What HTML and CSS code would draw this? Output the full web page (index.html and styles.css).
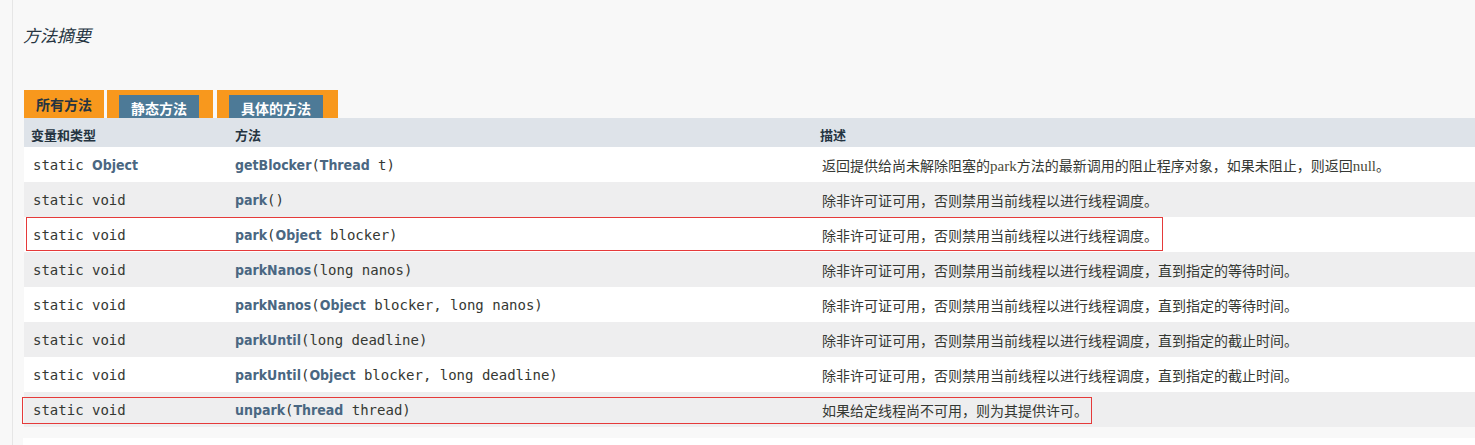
FILE: index.html
```html
<!DOCTYPE html>
<html lang="zh">
<head>
<meta charset="utf-8">
<title>方法摘要</title>
<link rel="stylesheet" href="styles.css">
</head>
<body>
<div class="page">
  <h3 class="title">方法摘要</h3>
  <div class="tabs">
    <span class="tab active">所有方法</span>
    <span class="tab"><span class="tab-inner">静态方法</span></span>
    <span class="tab"><span class="tab-inner">具体的方法</span></span>
  </div>
  <div class="summary">
    <div class="row head">
      <div class="cell">变量和类型</div>
      <div class="cell">方法</div>
      <div class="cell">描述</div>
    </div>
    <div class="row">
      <div class="cell code">static <b class="lnk">Object</b></div>
      <div class="cell code"><b class="lnk">getBlocker</b>(<b class="lnk">Thread</b> t)</div>
      <div class="cell desc">返回提供给尚未解除阻塞的<span class="serif">park</span>方法的最新调用的阻止程序对象，如果未阻止，则返回<span class="serif">null</span>。</div>
    </div>
    <div class="row alt">
      <div class="cell code">static void</div>
      <div class="cell code"><b class="lnk">park</b>()</div>
      <div class="cell desc">除非许可证可用，否则禁用当前线程以进行线程调度。</div>
    </div>
    <div class="row">
      <div class="cell code">static void</div>
      <div class="cell code"><b class="lnk">park</b>(<b class="lnk">Object</b> blocker)</div>
      <div class="cell desc">除非许可证可用，否则禁用当前线程以进行线程调度。</div>
      <span class="mark mark-a"></span>
    </div>
    <div class="row alt">
      <div class="cell code">static void</div>
      <div class="cell code"><b class="lnk">parkNanos</b>(long nanos)</div>
      <div class="cell desc">除非许可证可用，否则禁用当前线程以进行线程调度，直到指定的等待时间。</div>
    </div>
    <div class="row">
      <div class="cell code">static void</div>
      <div class="cell code"><b class="lnk">parkNanos</b>(<b class="lnk">Object</b> blocker, long nanos)</div>
      <div class="cell desc">除非许可证可用，否则禁用当前线程以进行线程调度，直到指定的等待时间。</div>
    </div>
    <div class="row alt">
      <div class="cell code">static void</div>
      <div class="cell code"><b class="lnk">parkUntil</b>(long deadline)</div>
      <div class="cell desc">除非许可证可用，否则禁用当前线程以进行线程调度，直到指定的截止时间。</div>
    </div>
    <div class="row">
      <div class="cell code">static void</div>
      <div class="cell code"><b class="lnk">parkUntil</b>(<b class="lnk">Object</b> blocker, long deadline)</div>
      <div class="cell desc">除非许可证可用，否则禁用当前线程以进行线程调度，直到指定的截止时间。</div>
    </div>
    <div class="row alt">
      <div class="cell code">static void</div>
      <div class="cell code"><b class="lnk">unpark</b>(<b class="lnk">Thread</b> thread)</div>
      <div class="cell desc">如果给定线程尚不可用，则为其提供许可。</div>
      <span class="mark mark-b"></span>
    </div>
  </div>
  <div class="next"></div>
</div>
</body>
</html>
```

FILE: styles.css
```css
html, body {
  margin: 0;
  padding: 0;
  background: #f8f8f8;
  overflow: hidden;
}
body {
  font-family: "DejaVu Sans", "Noto Sans CJK SC", sans-serif;
  color: #353833;
}
.page {
  margin-left: 12px;
  border-left: 1px solid #e6e6e6;
  padding-left: 11px;
  padding-top: 25px;
  min-height: 445px;
  box-sizing: border-box;
}
.title {
  margin: 0 0 0 -1px;
  font-family: "Noto Sans CJK SC", sans-serif;
  font-size: 17px;
  line-height: 20px;
  font-style: italic;
  font-weight: normal;
  color: #253441;
}
.tabs {
  margin-top: 45px;
  display: flex;
  align-items: flex-end;
  gap: 3px;
  height: 28px;
}
.tab {
  background: #f8981d;
  height: 28px;
  box-sizing: border-box;
  padding: 5px 14px 0 12px;
  font-family: "Noto Sans CJK SC", sans-serif;
  font-weight: bold;
  font-size: 14px;
  color: #fff;
  display: flex;
}
.tab + .tab + .tab { margin-left: 1px; padding-right: 15px; }
.tab.active {
  width: 80px;
  padding: 6px 0 0 12px;
  color: #253441;
  line-height: 16px;
}
.tab-inner {
  background: #4d7a97;
  padding: 3px 12px 0;
  line-height: 20px;
  height: 23px;
  box-sizing: border-box;
}
.summary {
  width: calc(100% + 2px);
}
.row {
  position: relative;
  display: grid;
  grid-template-columns: 204px 585px 1fr;
  height: 35px;
  align-items: center;
  background: #fff;
}
.row.alt { background: #eeeeef; }
.row.head {
  background: #dee3e9;
  height: 29px;
  font-family: "Noto Sans CJK SC", sans-serif;
  font-weight: bold;
  font-size: 13px;
  color: #253441;
  padding-top: 3px;
  box-sizing: border-box;
}
.cell {
  padding-left: 7px;
  white-space: nowrap;
}
.code {
  font-family: "DejaVu Sans Mono", monospace;
  font-size: 14px;
  color: #353833;
  padding-left: 9px;
}
.cell.code + .cell.code { padding-left: 7px; }
.lnk {
  font-family: "DejaVu Sans Condensed", "DejaVu Sans", sans-serif;
  font-stretch: condensed;
  font-weight: bold;
  color: #4a6782;
}
.desc {
  font-family: "Noto Sans CJK SC", sans-serif;
  font-size: 14px;
  color: #353833;
  padding-left: 9px;
}
.serif {
  font-family: "Liberation Serif", serif;
  font-size: 15px;
  color: #4a4a3a;
}
.mark {
  position: absolute;
  border: 1px solid #e53a3a;
  box-sizing: border-box;
  pointer-events: none;
}
.mark-a { left: 2px; top: 0; width: 1137px; height: 34px; }
.mark-b { left: -2px; top: 5px; width: 1070px; height: 27px; }
.next {
  margin-top: 11px;
  margin-left: -1px;
  height: 20px;
  background: #fff;
}
```
